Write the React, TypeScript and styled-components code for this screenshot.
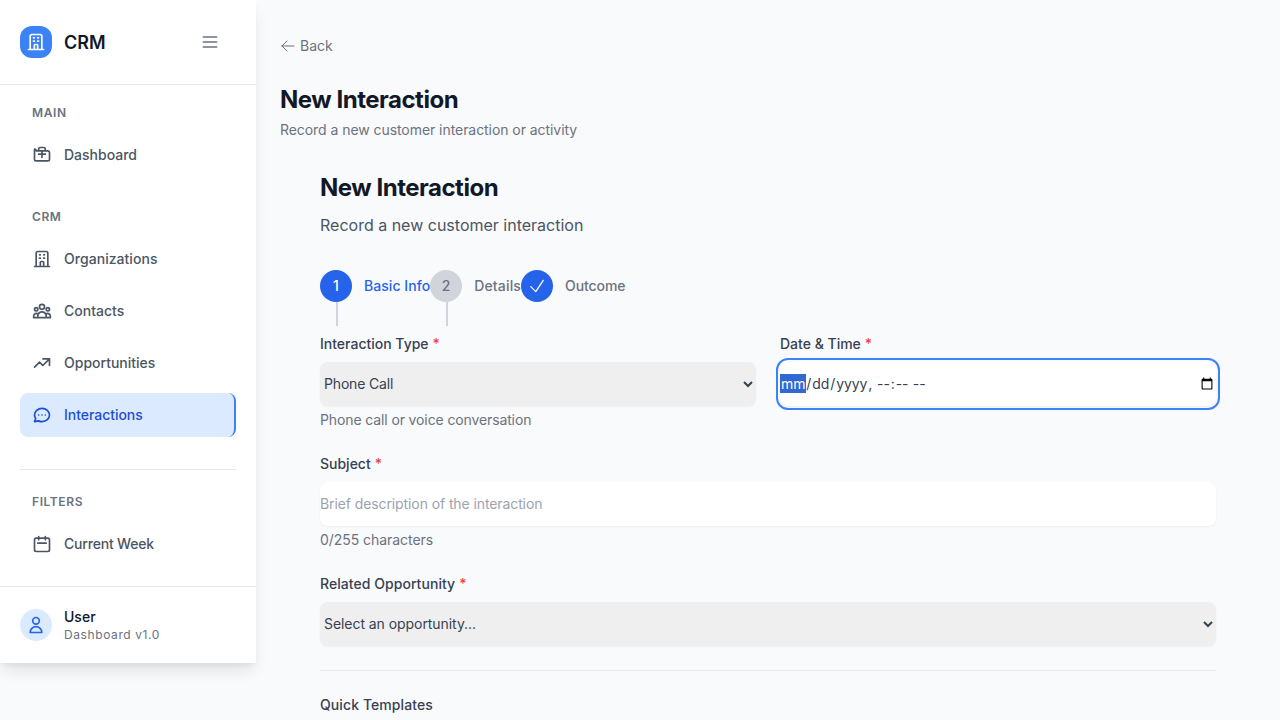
import React from 'react';
import styled, { createGlobalStyle } from 'styled-components';

const GlobalStyle = createGlobalStyle`
  *, *::before, *::after { box-sizing: border-box; }
  body {
    margin: 0;
    height: 720px;
    overflow: hidden;
    background: #f9fafb;
    color: #111827;
    font-family: Inter, "Liberation Sans", sans-serif;
    font-size: 16px;
    line-height: 24px;
  }
  h1, h2, p { margin: 0; }
  button, input, select { font: inherit; color: inherit; }
`;

const Shell = styled.div`
  display: flex;
  align-items: flex-start;
`;

const Sidebar = styled.aside`
  width: 256px;
  flex: none;
  display: flex;
  flex-direction: column;
  background: #fff;
  box-shadow: 0 10px 15px -3px rgba(0, 0, 0, 0.1), 0 4px 6px -2px rgba(0, 0, 0, 0.05);
`;

const SidebarHeader = styled.div`
  display: flex;
  align-items: center;
  justify-content: space-between;
  height: 85px;
  padding: 0 28px 0 20px;
  border-bottom: 1px solid #e5e7eb;
`;

const Brand = styled.div`
  display: flex;
  align-items: center;
  gap: 12px;
`;

const BrandName = styled.span`
  padding-top: 1px;
  font-size: 18px;
  font-weight: 600;
  line-height: 28px;
`;

const BrandMark = styled.span`
  display: flex;
  align-items: center;
  justify-content: center;
  width: 32px;
  height: 32px;
  border-radius: 12px;
  background: #3b82f6;
  color: #fff;
`;

const MenuButton = styled.button`
  display: flex;
  padding: 8px;
  border: 0;
  background: transparent;
  color: #6b7280;
`;

const Nav = styled.nav`
  padding: 20px;
`;

const NavSection = styled.section<{ $divided?: boolean }>`
  display: flex;
  flex-direction: column;
  gap: 8px;
  & + & { margin-top: 32px; }
  ${(p) => p.$divided && 'padding-top: 24px; border-top: 1px solid #e5e7eb;'}
`;

const NavHeading = styled.div`
  padding: 0 12px;
  margin-bottom: 4px;
  font-size: 12px;
  font-weight: 600;
  line-height: 16px;
  letter-spacing: 0.6px;
  color: #6b7280;
`;

const NavItem = styled.a<{ $active?: boolean; $tracking?: number }>`
  display: flex;
  align-items: center;
  gap: 12px;
  height: 44px;
  padding: 0 12px;
  border-radius: 8px;
  font-size: 14px;
  font-weight: 500;
  line-height: 20px;
  letter-spacing: ${(p) => p.$tracking ?? 0}px;
  color: ${(p) => (p.$active ? '#1d4ed8' : '#4b5563')};
  ${(p) => p.$active && 'background: #dbeafe; border-right: 2px solid #3b82f6;'}
`;

const SidebarFooter = styled.div`
  display: flex;
  align-items: center;
  gap: 12px;
  padding: 20px;
  border-top: 1px solid #e5e7eb;
`;

const Avatar = styled.span`
  display: flex;
  align-items: center;
  justify-content: center;
  width: 32px;
  height: 32px;
  border-radius: 50%;
  background: #dbeafe;
  color: #2563eb;
`;

const UserName = styled.div`
  font-size: 14px;
  font-weight: 500;
  line-height: 20px;
`;

const UserMeta = styled.div`
  font-size: 12px;
  line-height: 16px;
  letter-spacing: 0.6px;
  color: #6b7280;
`;

const Main = styled.main`
  flex: 1;
  padding: 36px 24px 0;
`;

const BackLink = styled.a`
  display: flex;
  align-items: center;
  gap: 4px;
  font-size: 14px;
  line-height: 20px;
  color: #6b7280;
`;

const PageHeader = styled.header`
  margin-top: 28px;
`;

const PageTitle = styled.h1`
  font-size: 24px;
  font-weight: 700;
  line-height: 32px;
  letter-spacing: -0.48px;
`;

const PageSubtitle = styled.p`
  margin-top: 4px;
  font-size: 14px;
  line-height: 20px;
  letter-spacing: -0.06px;
  color: #6b7280;
`;

const FormPanel = styled.div`
  padding: 32px 40px 0;
`;

const FormIntro = styled.p`
  margin-top: 9px;
  color: #4b5563;
`;

const Steps = styled.ol`
  display: flex;
  margin: 33px 0 32px;
  padding: 0;
  list-style: none;
`;

const Step = styled.li<{ $current?: boolean; $tracking?: number }>`
  position: relative;
  display: flex;
  align-items: center;
  gap: 12px;
  font-size: 14px;
  font-weight: 500;
  line-height: 20px;
  letter-spacing: ${(p) => p.$tracking ?? 0}px;
  color: ${(p) => (p.$current ? '#2563eb' : '#6b7280')};
  &:not(:last-child)::after {
    content: '';
    position: absolute;
    left: 16px;
    top: 32px;
    width: 2px;
    height: 24px;
    background: #d1d5db;
  }
`;

const StepMarker = styled.span<{ $filled?: boolean }>`
  display: flex;
  align-items: center;
  justify-content: center;
  width: 32px;
  height: 32px;
  border-radius: 50%;
  background: ${(p) => (p.$filled ? '#2563eb' : '#d1d5db')};
  color: ${(p) => (p.$filled ? '#fff' : '#6b7280')};
`;

const Form = styled.form`
  display: grid;
  grid-template-columns: 1fr 1fr;
  gap: 24px;
`;

const Field = styled.div<{ $wide?: boolean }>`
  display: flex;
  flex-direction: column;
  grid-column: ${(p) => (p.$wide ? '1 / -1' : 'auto')};
`;

const Label = styled.label<{ $tracking?: number }>`
  margin-bottom: 8px;
  font-size: 14px;
  font-weight: 500;
  line-height: 20px;
  letter-spacing: ${(p) => p.$tracking ?? 0}px;
  color: #374151;
`;

const Required = styled.span`
  margin-left: 4px;
  color: #ef4444;
`;

const Select = styled.select<{ $tracking?: number }>`
  height: 44px;
  padding: 0 0 1px;
  border: 0;
  border-radius: 8px;
  background: #efefef;
  box-shadow: 0 1px 2px rgba(0, 0, 0, 0.05);
  color: #374151;
  font-size: 14px;
  line-height: 20px;
  letter-spacing: ${(p) => p.$tracking ?? 0}px;
`;

const Input = styled.input`
  height: 44px;
  padding: 0;
  border: 0;
  border-radius: 8px;
  background: #fff;
  box-shadow: 0 1px 2px rgba(0, 0, 0, 0.05);
  color: #374151;
  font-size: 14px;
  line-height: 20px;
  letter-spacing: -0.1px;
  &[type='text'] { padding-bottom: 1px; }
  &::placeholder { color: #9ca3af; }
  &:focus { outline: 2px solid #3b82f6; outline-offset: 2px; }
`;

const Hint = styled.p<{ $tracking?: number }>`
  margin-top: 4px;
  font-size: 14px;
  line-height: 20px;
  letter-spacing: ${(p) => p.$tracking ?? 0}px;
  color: #6b7280;
`;

const Templates = styled.section`
  grid-column: 1 / -1;
  padding-top: 24px;
  border-top: 1px solid #e5e7eb;
`;

const Glyph = styled.svg`
  display: block;
  flex: none;
  fill: none;
  stroke: currentColor;
  stroke-linecap: round;
  stroke-linejoin: round;
`;

const paths = {
  building:
    'M19 21V5a2 2 0 00-2-2H7a2 2 0 00-2 2v16m14 0h2m-2 0h-5m-9 0H3m2 0h5M9 7h1m-1 4h1m4-4h1m-1 4h1m-5 10v-5a1 1 0 011-1h2a1 1 0 011 1v5m-4 0h4',
  menu: 'M4 6h16M4 12h16M4 18h16',
  dashboard:
    'M3 7v10a2 2 0 002 2h14a2 2 0 002-2V9a2 2 0 00-2-2H5a2 2 0 00-2-2zM8 7V5a2 2 0 012-2h4a2 2 0 012 2v2M8 11h8M12 7v8',
  group:
    'M17 20h5v-2a3 3 0 00-5.356-1.857M17 20H7m10 0v-2c0-.656-.126-1.283-.356-1.857M7 20H2v-2a3 3 0 015.356-1.857M7 20v-2c0-.656.126-1.283.356-1.857m0 0a5.002 5.002 0 019.288 0M15 7a3 3 0 11-6 0 3 3 0 016 0zm6 3a2 2 0 11-4 0 2 2 0 014 0zM7 10a2 2 0 11-4 0 2 2 0 014 0z',
  trend: 'M13 7h8m0 0v8m0-8l-8 8-4-4-6 6',
  chat: 'M8 12h.01M12 12h.01M16 12h.01M21 12c0 4.418-4.03 8-9 8a9.863 9.863 0 01-4.255-.949L3 20l1.395-3.72C3.512 15.042 3 13.574 3 12c0-4.418 4.03-8 9-8s9 3.582 9 8z',
  calendar: 'M8 7V3m8 4V3m-9 8h10M5 21h14a2 2 0 002-2V7a2 2 0 00-2-2H5a2 2 0 00-2 2v12a2 2 0 002 2z',
  user: 'M16 7a4 4 0 11-8 0 4 4 0 018 0zM12 14a7 7 0 00-7 7h14a7 7 0 00-7-7z',
  back: 'M10.5 19.5L3 12m0 0l7.5-7.5M3 12h18',
  check: 'M4.5 12.75l6 6 9-13.5',
};

type IconProps = { name: keyof typeof paths; size?: number; weight?: number };

const Icon = ({ name, size = 20, weight = 2 }: IconProps) => (
  <Glyph width={size} height={size} viewBox="0 0 24 24" strokeWidth={weight} aria-hidden="true">
    <path d={paths[name]} />
  </Glyph>
);

export default function App() {
  return (
    <>
      <GlobalStyle />
      <Shell>
        <Sidebar>
          <SidebarHeader>
            <Brand>
              <BrandMark><Icon name="building" /></BrandMark>
              <BrandName>CRM</BrandName>
            </Brand>
            <MenuButton type="button"><Icon name="menu" /></MenuButton>
          </SidebarHeader>
          <Nav>
            <NavSection>
              <NavHeading>MAIN</NavHeading>
              <NavItem><Icon name="dashboard" />Dashboard</NavItem>
            </NavSection>
            <NavSection>
              <NavHeading>CRM</NavHeading>
              <NavItem $tracking={0.04}><Icon name="building" />Organizations</NavItem>
              <NavItem><Icon name="group" />Contacts</NavItem>
              <NavItem><Icon name="trend" />Opportunities</NavItem>
              <NavItem $active $tracking={-0.04}><Icon name="chat" />Interactions</NavItem>
            </NavSection>
            <NavSection $divided>
              <NavHeading>FILTERS</NavHeading>
              <NavItem $tracking={-0.19}><Icon name="calendar" />Current Week</NavItem>
            </NavSection>
          </Nav>
          <SidebarFooter>
            <Avatar><Icon name="user" /></Avatar>
            <div>
              <UserName>User</UserName>
              <UserMeta>Dashboard v1.0</UserMeta>
            </div>
          </SidebarFooter>
        </Sidebar>

        <Main>
          <BackLink><Icon name="back" size={16} weight={1.5} />Back</BackLink>
          <PageHeader>
            <PageTitle>New Interaction</PageTitle>
            <PageSubtitle>Record a new customer interaction or activity</PageSubtitle>
          </PageHeader>
          <FormPanel>
            <PageTitle as="h2">New Interaction</PageTitle>
            <FormIntro>Record a new customer interaction</FormIntro>
            <Steps>
              <Step $current $tracking={0.05}><StepMarker $filled>1</StepMarker>Basic Info</Step>
              <Step $tracking={0.17}><StepMarker>2</StepMarker>Details</Step>
              <Step $tracking={-0.08}><StepMarker $filled><Icon name="check" weight={1.5} /></StepMarker>Outcome</Step>
            </Steps>
            <Form>
              <Field>
                <Label>Interaction Type<Required>*</Required></Label>
                <Select $tracking={-0.17}><option>Phone Call</option></Select>
                <Hint $tracking={-0.12}>Phone call or voice conversation</Hint>
              </Field>
              <Field>
                <Label>Date &amp; Time<Required>*</Required></Label>
                <Input type="datetime-local" autoFocus />
              </Field>
              <Field $wide>
                <Label>Subject<Required>*</Required></Label>
                <Input type="text" placeholder="Brief description of the interaction" />
                <Hint $tracking={-0.05}>0/255 characters</Hint>
              </Field>
              <Field $wide>
                <Label $tracking={0.05}>Related Opportunity<Required>*</Required></Label>
                <Select $tracking={-0.06}><option>Select an opportunity...</option></Select>
              </Field>
              <Templates>
                <Label as="h2" $tracking={0.09}>Quick Templates</Label>
              </Templates>
            </Form>
          </FormPanel>
        </Main>
      </Shell>
    </>
  );
}
